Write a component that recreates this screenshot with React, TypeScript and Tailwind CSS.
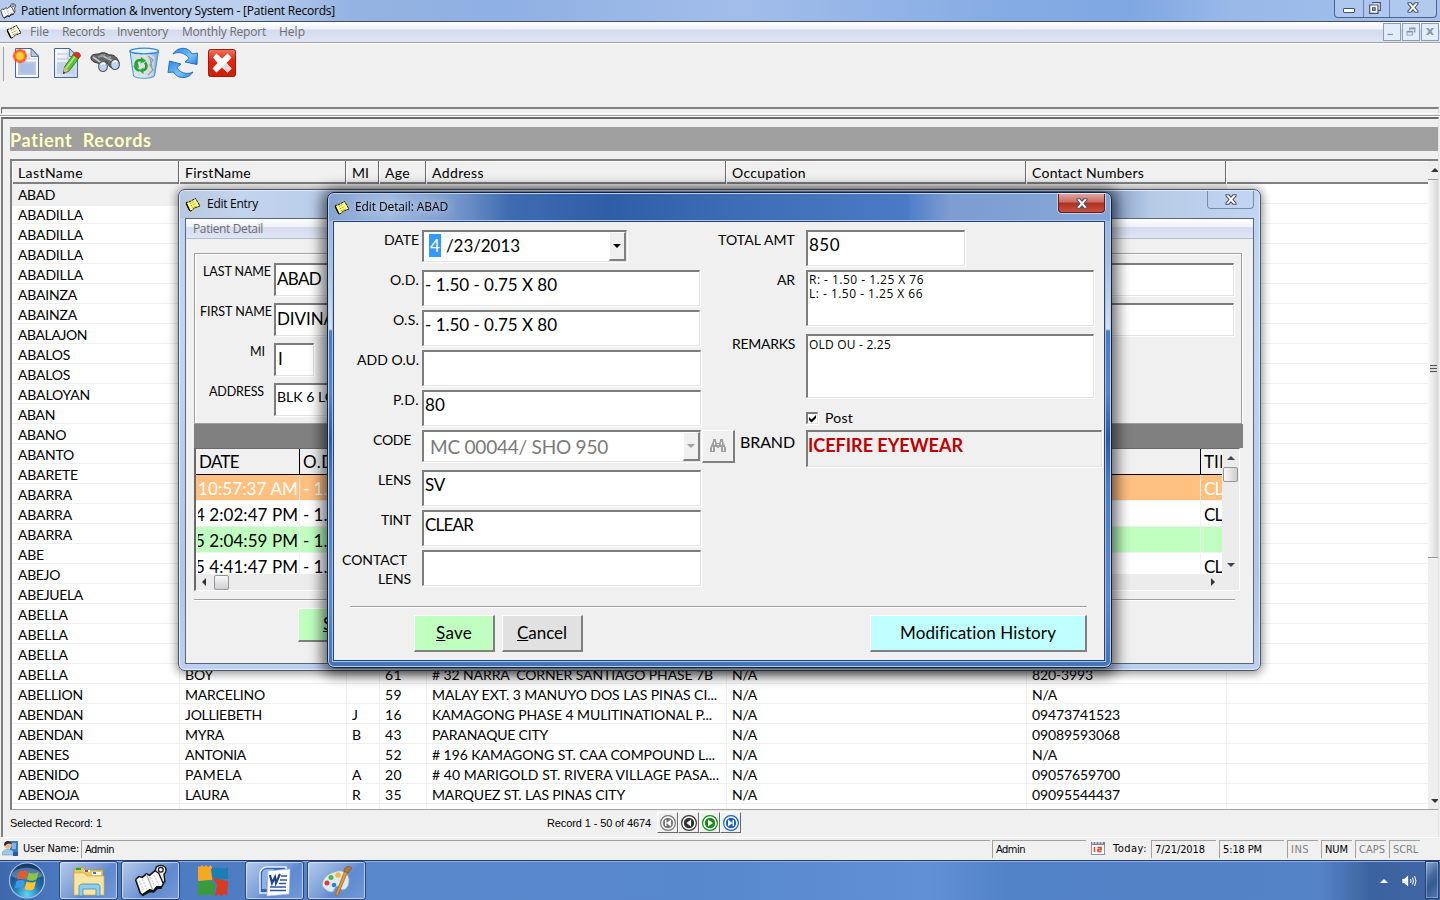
import React, { useLayoutEffect, useRef } from "react";

const CAL = "font-['Lato','Noto_Sans',sans-serif]";
const SEG = "font-['Open_Sans','Noto_Sans',sans-serif]";
const TAH = "font-['DejaVu_Sans_Condensed','DejaVu_Sans',sans-serif]";
const MSS = "font-['Liberation_Sans',sans-serif]";

/* Text run tracked so that it spans exactly `w` pixels. */
function T({ w, className = "", children }: { w?: number; className?: string; children: React.ReactNode }) {
  const ref = useRef<HTMLSpanElement>(null);
  useLayoutEffect(() => {
    const el = ref.current;
    if (!el || !w) return;
    el.style.letterSpacing = "0px";
    const n = (el.textContent || "").length;
    const natural = el.getBoundingClientRect().width;
    if (n > 1) el.style.letterSpacing = `${(w - natural) / n}px`;
  }, [w]);
  return (
    <span ref={ref} className={`inline-block shrink-0 whitespace-pre ${className}`}>
      {children}
    </span>
  );
}

const LAST = [
  "ABAD", "ABADILLA", "ABADILLA", "ABADILLA", "ABADILLA", "ABAINZA", "ABAINZA", "ABALAJON", "ABALOS", "ABALOS",
  "ABALOYAN", "ABAN", "ABANO", "ABANTO", "ABARETE", "ABARRA", "ABARRA", "ABARRA", "ABE", "ABEJO", "ABEJUELA",
  "ABELLA", "ABELLA", "ABELLA",
];
type Cell = string;
const FULL: { c: Cell[]; aw: number }[] = [
  { c: ["ABELLA", "BOY", "", "61", "# 32 NARRA  CORNER SANTIAGO PHASE 7B", "N/A", "820-3993"], aw: 281 },
  { c: ["ABELLION", "MARCELINO", "", "59", "MALAY EXT. 3 MANUYO DOS LAS PINAS CI...", "N/A", "N/A"], aw: 285 },
  { c: ["ABENDAN", "JOLLIEBETH", "J", "16", "KAMAGONG PHASE 4 MULITINATIONAL P...", "N/A", "09473741523"], aw: 280 },
  { c: ["ABENDAN", "MYRA", "B", "43", "PARANAQUE CITY", "N/A", "09089593068"], aw: 116 },
  { c: ["ABENES", "ANTONIA", "", "52", "# 196 KAMAGONG ST. CAA COMPOUND L...", "N/A", "N/A"], aw: 283 },
  { c: ["ABENIDO", "PAMELA", "A", "20", "# 40 MARIGOLD ST. RIVERA VILLAGE PASA...", "N/A", "09057659700"], aw: 287 },
  { c: ["ABENOJA", "LAURA", "R", "35", "MARQUEZ ST. LAS PINAS CITY", "N/A", "09095544437"], aw: 193 },
];
const NAMEW: Record<string, number> = {
  ABAD: 37, ABADILLA: 65, ABAINZA: 59, ABALAJON: 69, ABALOS: 52, ABALOYAN: 72, ABAN: 37, ABANO: 48, ABANTO: 56,
  ABARETE: 60, ABARRA: 54, ABE: 26, ABEJO: 42, ABEJUELA: 65, ABELLA: 50, ABELLION: 65, ABENDAN: 65, ABENES: 51,
  ABENIDO: 61, ABENOJA: 61, BOY: 28, MARCELINO: 80, JOLLIEBETH: 77, MYRA: 39, ANTONIA: 61, PAMELA: 57, LAURA: 44,
  "N/A": 25, "820-3993": 61, "09473741523": 88, "09089593068": 88, "09057659700": 88, "09095544437": 88,
};
const COLS = "grid grid-cols-[167px_167px_33px_47px_300px_300px_200px_1fr]";

function Note({ yellow = false, className = "" }: { yellow?: boolean; className?: string }) {
  return (
    <svg viewBox="0 0 16 16" className={`h-4 w-4 shrink-0 ${className}`}>
      <path d="M1 5.500 L4 5 L10.500 1.500 L12 4 L15 9 L9.500 11 L5.500 14.500 L3.500 11.500 Z" fill={yellow ? "#ffff70" : "#fcfcd8"} stroke="#111" strokeWidth="1" strokeDasharray="2.500 .6" />
      <path d="M5 6.500 L9.500 4.300 M6 8.800 L10.800 6.500 M7 11 L12 8.700" stroke={yellow ? "#8c8c50" : "#777"} strokeWidth=".9" strokeDasharray="1.500 1" />
      <path d="M1.200 6.500 L5 14" stroke="#000" strokeWidth="1.300" />
    </svg>
  );
}

function Binder({ className = "" }: { className?: string }) {
  return (
    <svg viewBox="0 0 32 32" className={className}>
      <path d="M1.500 15 L5 12 L8 13 L12 9.500 L15 11 L21 6 L24 8 L29 18 L27 22 L22 22 L19 26 L15 25 L8 30 L6 28 Z" fill="#fbfbfb" />
      <path d="M5 12 L8 13 L12 9.500 L15 11 L21 6 M1.500 15 L5 12 M29 18 L27 22 L22 22 L19 26 L15 25 L8 30 L6 28 L1.500 15" fill="none" stroke="#111" strokeWidth="1.500" strokeLinejoin="round" />
      <path d="M8 30.500 L15 26.500 L19 27 L22.500 23.500 L27 23" fill="none" stroke="#111" strokeWidth="1.800" />
      <path d="M12 10 L18 25" stroke="#b0b0b0" strokeWidth="1.200" />
      <path d="M5 16 L9 25 M8 15 L12.500 24 M16 13 L20 21.500 M19.500 11 L24 20" stroke="#cfcfcf" strokeWidth="1.200" strokeDasharray="2 1" />
      <path d="M21 7 C20 2 25 .5 29 2 C32 4 31.500 8 29 10 L30 17 L28 18 L24 9 Z" fill="#eee" stroke="#111" strokeWidth="1.300" />
      <circle cx="26" cy="5.500" r="2.300" fill="#fff" stroke="#111" strokeWidth="1.200" />
    </svg>
  );
}

function XGlyph({ dark = "#4b5468" }: { dark?: string }) {
  return (
    <svg viewBox="0 0 12 11" className="h-[11px] w-3">
      <path d="M1 .8 H4 L6 3.2 L8 .8 H11 V2 L8 5.5 L11 9 V10.2 H8 L6 7.8 L4 10.2 H1 V9 L4 5.5 L1 2 Z" fill="#fff" stroke={dark} strokeWidth="1.1" />
    </svg>
  );
}

function ToolIcons() {
  const s = "h-8 w-8 shrink-0";
  return (
    <>
      <svg viewBox="0 0 32 32" className={s}>
        <defs>
          <linearGradient id="pg" x1="0" y1="0" x2="1" y2="1"><stop offset="0" stopColor="#fff" /><stop offset="1" stopColor="#c4d3ee" /></linearGradient>
          <radialGradient id="sun"><stop offset="0" stopColor="#fff27a" /><stop offset=".4" stopColor="#ffb52e" /><stop offset=".7" stopColor="#f3601f" /><stop offset="1" stopColor="#f3401f" stopOpacity="0" /></radialGradient>
        </defs>
        <path d="M4.5 1.5 H20.500 L27.500 9 V30.500 H4.500 Z" fill="#fff" stroke="#466796" />
        <path d="M20 1.500 L27.500 9.500 H20 Z" fill="#b8c8e2" stroke="#466796" strokeWidth=".8" />
        <path d="M18 6 V12 H26 M13 12 H18" stroke="#b9c7e0" fill="none" />
        <rect x="7" y="14.500" width="18" height="13.500" fill="#b7c8e8" />
        <rect x="9" y="17" width="14" height="9" fill="#a9bde2" opacity=".6" />
        <circle cx="9" cy="9" r="8" fill="url(#sun)" />
        <path d="M9 2 V16 M2 9 H16 M4 4 L14 14 M14 4 L4 14" stroke="#f5511e" strokeWidth="1.200" strokeDasharray="2 10 2" />
        <circle cx="9" cy="9" r="3.500" fill="#ffcf3c" />
      </svg>
      <svg viewBox="0 0 32 32" className={s}>
        <path d="M4.500 1.500 H19.500 L27.500 9 V30.500 H4.500 Z" fill="url(#pg)" stroke="#466796" />
        <path d="M19.500 1.500 L27 9.500 H19.500 Z" fill="#c8d5ea" stroke="#466796" strokeWidth=".8" />
        <path d="M7 7 H17 M7 12 H20 M18 5 V12" stroke="#b5c4df" />
        <rect x="7" y="15" width="18" height="12" fill="#c5d2ea" />
        <path d="M23.500 7 L29 11 L19 24 L13.500 26.500 L14.500 20 Z" fill="#5cc238" stroke="#2d7a22" strokeWidth=".9" />
        <path d="M25 9.500 L16 21.500" stroke="#b4ef7a" strokeWidth="1.600" />
        <path d="M14.500 20 L18.500 23.500 L13.500 26.500 Z" fill="#deb98c" />
        <path d="M13.500 24.500 L13 27 L15.300 25.700 Z" fill="#222" />
        <path d="M24.500 5.800 C27 4 32 7 30 9.800 L28.300 11.500 L23.200 7.600 Z" fill="#dd3322" stroke="#a31c12" strokeWidth=".7" />
      </svg>
      <svg viewBox="0 0 32 32" className={s}>
        <path d="M2 10 C3 6 9 8 12 6 C17 5 20 8 20 8 C25 7 29 11 30 16 L27 22 L21 20 L17 14 L15 18 L12 17 L5 15 C3 14 1.500 12 2 10 Z" fill="#666" stroke="#333" />
        <path d="M4 10 L14 17 M12 8 L26 15" stroke="#c5c5c5" strokeWidth="1.800" />
        <path d="M9 10 L16 8 M18 11 L22 10" stroke="#999" strokeWidth="2" />
        <ellipse cx="14" cy="19.500" rx="4.400" ry="5" fill="#bcd7f4" stroke="#555" strokeWidth="1.100" />
        <ellipse cx="26" cy="17.500" rx="4.400" ry="5" fill="#bcd7f4" stroke="#555" strokeWidth="1.100" />
        <path d="M12 18 C13 16 15 16 16 17 M24 16 C25 14 27 14 28 15" stroke="#fff" strokeWidth="1.500" fill="none" />
      </svg>
      <svg viewBox="0 0 32 32" className={s}>
        <defs><linearGradient id="bin" x1="0" x2="1"><stop offset="0" stopColor="#b9e1f6" /><stop offset=".5" stopColor="#e9f3f8" /><stop offset="1" stopColor="#74a9dc" /></linearGradient></defs>
        <path d="M2 4 L5.500 29 C8 32 24 32 26.500 29 L30.500 4 Z" fill="url(#bin)" stroke="#4d91cf" />
        <ellipse cx="16.200" cy="4" rx="14.300" ry="2.800" fill="#dff2fc" stroke="#3986cf" strokeWidth="1.300" />
        <path d="M6 9 L10 7 L15 9 L21 7 L27 10 L25 28 L18 30 L10 29 Z" fill="#d9dde0" opacity=".8" />
        <path d="M20 9 L25 13 L22 18 L25 23 L20 28 M22 11 L24 20" fill="none" stroke="#90a0ad" strokeWidth="1.300" />
        <path d="M7.500 18 C7.500 14 11 12 14.500 13.500 M17 15.500 C20 19 18 23 14.500 23.500 M11.500 23.500 C8.500 23 7 21 7.500 18.500" fill="none" stroke="#2a9d2c" strokeWidth="2.600" />
        <path d="M13 10 L18.500 14 L12.500 16.500 Z M15.500 20.500 L15.500 27 L11 23.500 Z M5 19.500 L10 15.500 L11 21 Z" fill="#29ad2e" />
      </svg>
      <svg viewBox="0 0 32 32" className={s}>
        <defs><linearGradient id="rf" x1="0" y1="0" x2="1" y2="1"><stop offset="0" stopColor="#2786e0" /><stop offset=".6" stopColor="#7bc2fb" /><stop offset="1" stopColor="#2877d2" /></linearGradient></defs>
        <path d="M6 7 C11 -1 22 0 25 7 L30.500 6 L30 17.500 L18 15 L22 11.500 C19 6 11 4 6 7 Z" fill="url(#rf)" stroke="#1f69ba" strokeWidth=".9" />
        <path d="M26 25 C21 33 10 32 6.500 25 L1 25.500 L2.500 14 L14 17 L10 20.500 C13 26 20 28 26 25 Z" fill="url(#rf)" stroke="#1f69ba" strokeWidth=".9" />
      </svg>
      <svg viewBox="0 0 32 32" className={s}>
        <defs><linearGradient id="rd" x1="0" y1="0" x2="0" y2="1"><stop offset="0" stopColor="#f0765f" /><stop offset=".4" stopColor="#e3280f" /><stop offset="1" stopColor="#cf1d06" /></linearGradient></defs>
        <rect x="2.500" y="2.500" width="27" height="27" rx="2" fill="url(#rd)" stroke="#9f1a0b" />
        <path d="M7 10.500 L10.500 6.500 L16 11.500 L21.500 6.500 L25.500 10.500 L20.500 16 L25.500 21.500 L21.500 25.500 L16 20.500 L10.500 25.500 L6.500 21.500 L11.500 16 Z" fill="#fff" />
        <path d="M16 20.500 L21.500 25.500 L25.500 21.500 L20.500 16" fill="#dcdcdc" />
      </svg>
    </>
  );
}

const SUNK = "border-t-2 border-l-2 border-b border-r border-t-[#7c7c7c] border-l-[#7c7c7c] border-b-[#e3e3e3] border-r-[#e3e3e3] shadow-[1px_1px_0_#fff]";
const RAISED = "border-t border-l border-b-2 border-r-2 border-t-white border-l-white border-b-[#808080] border-r-[#808080]";

function Caret({ dir = "down", color = "#000", className = "" }: { dir?: "up" | "down" | "left" | "right"; color?: string; className?: string }) {
  const d = { down: "M0 2 H8 L4 6 Z", up: "M0 6 H8 L4 2 Z", left: "M6 0 V8 L2 4 Z", right: "M2 0 V8 L6 4 Z" }[dir];
  return (
    <svg viewBox="0 0 8 8" className={`h-2 w-2 shrink-0 ${className}`}><path d={d} fill={color} /></svg>
  );
}

function Row({ label, lw, pr = 3, children }: { label: string; lw: number; pr?: number; children: React.ReactNode }) {
  return (
    <div className="flex h-10 items-start">
      <div className="flex w-[88px] shrink-0 justify-end text-[14px] leading-[20px]" style={{ paddingRight: pr }}>
        <T w={lw}>{label}</T>
      </div>
      {children}
    </div>
  );
}
function Field({ v, w, cls = "w-[278px]" }: { v?: string; w?: number; cls?: string }) {
  return (
    <div className={`h-9 shrink-0 overflow-hidden bg-white pl-[1px] text-[17px] leading-[26px] ${SUNK} ${cls}`}>{v ? <T w={w}>{v}</T> : null}</div>
  );
}

function DetailWindow() {
  return (
    <section className="absolute left-[327px] top-[192px] flex h-[476px] w-[785px] flex-col rounded-[7px] border border-[#14233c] bg-[linear-gradient(180deg,#93b0de_0px,#a8bfe2_70px,#d4e0f2_136px,#4b7cc3_138px,#5585c9_200px,#2c5a9d_245px,#4b7bc0_290px,#5d8acb_400px,#4573b8_100%)] pb-[6px] pl-[5px] pr-[6px] shadow-[inset_0_0_0_1px_#b9d0ee,0_2px_14px_5px_rgba(0,0,0,0.6)]">
      <div className="-ml-[4px] -mr-[5px] mt-px flex h-[27px] shrink-0 items-start rounded-t-[5px] bg-[linear-gradient(90deg,#87a4d2_0px,#9fb8df_60px,#7898cc_125px,#3f6cb0_180px,#2f5ea8_280px,#3c6cb5_400px,#4b7bc6_580px,#4f7fc8_545px,#7c9cd2_620px,#84a4d6_730px,#84a4d6_100%)] pl-[5px]">
        <Note yellow className="mt-[6px]" />
        <div className={`ml-[5px] mt-[4px] rounded-full text-[12px] leading-[18px] text-black ${SEG}`}><T w={93} className="drop-shadow-[0_0_5px_rgba(255,255,255,0.9)]">Edit Detail: ABAD</T></div>
        <div className="ml-auto mr-[5px] flex h-[19px] w-[47px] items-center justify-center rounded-b-[4px] border border-t-0 border-[#5b1f1f] bg-[linear-gradient(#dfa49c,#cc6d62_45%,#ae2e1f_50%,#c8513f)] shadow-[0_0_0_1px_rgba(255,255,255,0.5)]">
          <XGlyph />
        </div>
      </div>
      <div className={`flex grow flex-col border border-[#26436f] bg-[#f0f0f0] text-black shadow-[0_0_0_1px_#a9c4ea] ${CAL}`}>
        <div className="flex h-[365px] pt-[8px]">
          <div className="w-[372px] shrink-0">
            <Row label="DATE" lw={35}>
              <div className={`flex h-8 w-[205px] items-stretch bg-white pl-[5px] text-[17px] leading-[27px] ${SUNK}`}>
                <span className="mt-[2px] h-[23px] w-3 bg-[#3399ff] pl-[1px] leading-[24px] text-white">4</span>
                <T w={74} className="ml-[5px]">/23/2013</T>
                <div className={`ml-auto flex w-[17px] items-center justify-center bg-[#f0f0f0] ${RAISED}`}><Caret /></div>
              </div>
            </Row>
            <Row label="O.D." lw={29}><Field v="- 1.50 - 0.75 X 80" w={132} /></Row>
            <Row label="O.S." lw={26}><Field v="- 1.50 - 0.75 X 80" w={132} /></Row>
            <Row label="ADD O.U." lw={62}><Field cls="w-[279px]" /></Row>
            <Row label="P.D." lw={26}><Field v="80" w={20} cls="w-[279px]" /></Row>
            <Row label="CODE" lw={38} pr={11}>
              <div className={`flex h-8 w-[279px] shrink-0 items-stretch bg-white pl-[6px] text-[19px] leading-[30px] text-[#7a7a7a] ${SUNK}`}>
                <T w={178}>MC 00044/ SHO 950</T>
                <div className={`ml-auto flex w-[17px] items-center justify-center bg-[#f0f0f0] ${RAISED}`}><Caret color="#a0a0a0" /></div>
              </div>
              <div className={`ml-[1px] flex h-[33px] w-[33px] shrink-0 items-center justify-center bg-[#f0f0f0] ${RAISED}`}>
                <svg viewBox="0 0 16 14" className="h-[14px] w-4" fill="#a0a0a0">
                  <path d="M3 0 H6 V2 L7 4 H9 L10 2 V0 H13 V2 L16 9 V13 H11 V8 H9 V9 H7 V8 H5 V13 H0 V9 L3 2 Z" />
                  <path d="M2 8 H3 V12 H2 Z M13 8 H14 V12 H13 Z M4 3 H5 V6 H4 Z M11 3 H12 V6 H11 Z M7 5 H9 V6 H7 Z" fill="#f0f0f0" />
                </svg>
              </div>
            </Row>
            <Row label="LENS" lw={33} pr={11}><Field v="SV" w={20} cls="w-[279px]" /></Row>
            <Row label="TINT" lw={30} pr={11}><Field v="CLEAR" w={48} cls="w-[279px]" /></Row>
            <div className="flex h-10 items-start">
              <div className="flex w-[88px] shrink-0 flex-col items-end pr-[11px] text-[14px] leading-[19px]">
                <T w={65} className="mr-1">CONTACT</T><T w={33}>LENS</T>
              </div>
              <Field cls="w-[279px]" />
            </div>
          </div>
          <div className="flex w-[396px] shrink-0 flex-col text-[14px] leading-[20px]">
            <div className="flex h-10"><div className="flex w-[100px] shrink-0 justify-end pr-[11px]"><T w={77}>TOTAL AMT</T></div>
              <Field v="850" w={31} cls="w-[159px]" /></div>
            <div className="flex h-16"><div className="flex w-[100px] shrink-0 justify-end pr-[11px]"><T w={18}>AR</T></div>
              <div className={`flex h-14 w-[288px] flex-col items-start bg-white pl-[1px] pt-[1px] text-[12px] leading-[14px] ${SEG} ${SUNK}`}>
                <T w={115}>R: - 1.50 - 1.25 X 76</T><T w={114}>L: - 1.50 - 1.25 X 66</T>
              </div></div>
            <div className="flex h-[74px]"><div className="flex w-[100px] shrink-0 justify-end pr-[11px]"><T w={63}>REMARKS</T></div>
              <div className={`h-16 w-[288px] bg-white pl-[1px] pt-[1px] text-[12px] leading-[16px] ${SEG} ${SUNK}`}><T w={82}>OLD OU - 2.25</T></div></div>
            <div className="mb-[2px] flex h-5 items-center pl-[100px]">
              <div className={`flex h-3 w-3 items-center justify-center bg-white ${SUNK}`}><svg viewBox="0 0 9 9" className="h-[9px] w-[9px] shrink-0"><path d="M1 3 L3.500 5.500 L8 1 V4 L3.500 8.500 L1 6 Z" fill="#000" /></svg></div>
              <T w={28} className="ml-[7px]">Post</T>
            </div>
            <div className="flex h-[37px]"><div className="flex w-[100px] shrink-0 justify-end pr-[11px] text-[16px] leading-[23px]"><T w={55}>BRAND</T></div>
              <div className={`h-[37px] w-[296px] bg-[#f0f0f0] text-[18px] font-bold leading-[27px] text-[#c00000] ${SUNK}`}><T w={155}>ICEFIRE EYEWEAR</T></div></div>
          </div>
        </div>
        <div className="ml-[16px] mt-[19px] h-[2px] w-[737px] shrink-0 border-b border-white bg-[#a0a0a0]" />
        <div className="mt-[7px] flex text-[17px] leading-[34px]">
          <div className={`ml-[80px] flex h-[37px] w-[81px] justify-center bg-[#c0ffc0] ${RAISED}`}><T w={36}><u>S</u>ave</T></div>
          <div className={`ml-[7px] flex h-[37px] w-[81px] justify-center bg-[#e1e1e1] ${RAISED}`}><T w={50}><u>C</u>ancel</T></div>
          <div className={`ml-[287px] flex h-[37px] w-[217px] justify-center bg-[#c0ffff] ${RAISED}`}><T w={156}>Modification History</T></div>
        </div>
      </div>
    </section>
  );
}

function ELabel({ t, w, pr }: { t: string; w: number; pr: number }) {
  return <div className="flex w-[79px] shrink-0 justify-end text-[12.500px] leading-[18px]" style={{ paddingRight: pr }}><T w={w}>{t}</T></div>;
}

const GRID = [
  { d: "10:57:37 AM", od: "- 1.50", t: "CL", c: "bg-[#ffc080] text-white", w: 100 },
  { d: "4 2:02:47 PM", od: "- 1.50", t: "CL", c: "bg-white", w: 103 },
  { d: "5 2:04:59 PM", od: "- 1.50", t: "", c: "bg-[#c0ffc0]", w: 103 },
  { d: "5 4:41:47 PM", od: "- 1.50", t: "CL", c: "bg-white", w: 103 },
];

function EntryWindow() {
  return (
    <section className="absolute left-[178px] top-[189px] flex h-[482px] w-[1083px] flex-col rounded-[7px] border border-[#4b5568] bg-[linear-gradient(180deg,#bdd2f0,#c0d6f6_30%,#b0c6e8_80%,#bdd0f0)] px-[6px] pb-[6px] shadow-[inset_0_0_0_1px_#e2edfb,0_1px_9px_2px_rgba(0,0,0,0.4)]">
      <div className="-mx-[5px] mt-px flex h-[27px] shrink-0 items-start rounded-t-[5px] bg-[linear-gradient(90deg,#b8c8de,#c3d4ee_60px,#b7cbe8_160px,#5f7fb2_900px,#b7cae6_970px,#c2d5f3)] pl-[5px]">
        <Note yellow className="mt-[6px]" />
        <div className={`ml-[6px] mt-[4px] text-[12px] leading-[18px] text-black ${SEG}`}><T w={51}>Edit Entry</T></div>
        <div className="ml-auto mr-[5px] flex h-[18px] w-[47px] items-center justify-center rounded-b-[4px] border border-t-0 border-[#7b8ba8]"><XGlyph /></div>
      </div>
      <div className={`flex grow flex-col overflow-hidden border border-[#5b6678] bg-[#f0f0f0] text-black ${CAL}`}>
        <div className={`h-5 shrink-0 border-b border-[#b4bccf] bg-[linear-gradient(#fff,#eef1f9_40%,#d6dcee_45%,#dfe5f5)] pl-[7px] text-[12px] leading-[20px] text-[#6d6d6d] ${SEG}`}><T w={70}>Patient Detail</T></div>
        <div className="ml-[8px] mt-[14px] flex h-[171px] w-[1048px] shrink-0 flex-col border border-[#a0a0a0] pt-[9px] shadow-[inset_1px_1px_0_#fff,1px_1px_0_#fff]">
          <div className="flex h-10"><ELabel t="LAST NAME" w={68} pr={3} /><div className={`h-[33px] w-[960px] bg-white pl-[1px] text-[17px] leading-[27px] ${SUNK}`}><T w={44}>ABAD</T></div></div>
          <div className="flex h-10"><ELabel t="FIRST NAME" w={72} pr={2} /><div className={`h-[33px] w-[960px] bg-white pl-[1px] text-[17px] leading-[27px] ${SUNK}`}><T w={58}>DIVINA</T></div></div>
          <div className="flex h-10"><ELabel t="MI" w={15} pr={9} /><div className={`h-[33px] w-[40px] bg-white pl-[2px] text-[17px] leading-[28px] ${SUNK}`}>I</div></div>
          <div className="flex h-9"><ELabel t="ADDRESS" w={55} pr={10} /><div className={`h-[33px] w-[500px] bg-white pl-[1px] text-[14px] leading-[24px] ${SUNK}`}><T w={67}>BLK 6 LOT</T></div></div>
        </div>
        <div className="ml-[8px] h-6 w-[1049px] shrink-0 bg-[#808080]" />
        <div className="ml-[8px] flex h-[143px] w-[1046px] shrink-0 flex-col border-b border-l-2 border-r border-t border-b-white border-l-[#696969] border-r-white border-t-[#696969]">
          <div className="flex h-[125px] overflow-hidden">
            <div className="w-[1026px] shrink-0 overflow-hidden">
              <div className="flex h-[26px] border-b border-black text-[17px] leading-[26px]">
                <div className="w-[104px] shrink-0 border-r border-black pl-[3px]"><T w={40}>DATE</T></div>
                <div className="w-[901px] shrink-0 border-r border-black pl-[3px]"><T w={36}>O.D.</T></div>
                <div className="w-[21px] overflow-hidden pl-[3px]"><T w={38}>TINT</T></div>
              </div>
              {GRID.map((r, i) => (
                <div key={i} className={`flex h-[26px] border-b border-[#f0f0f0] text-[17px] leading-[27px] ${r.c}`}>
                  <div className="flex w-[104px] shrink-0 border-r border-[#f0f0f0] pl-[2px]"><div className="flex grow justify-end overflow-hidden pr-px"><T w={r.w}>{r.d}</T></div></div>
                  <div className="w-[901px] shrink-0 border-r border-[#f0f0f0] pl-[3px]"><T w={44}>{r.od}</T></div>
                  <div className="w-[21px] overflow-hidden pl-[3px] leading-[28px]">{r.t ? <T w={48}>{r.t + "EAR"}</T> : null}</div>
                </div>
              ))}
            </div>
            <div className="flex w-[17px] shrink-0 flex-col items-center bg-[#ececec]">
              <Caret dir="up" color="#444" className="mt-[5px]" />
              <div className="mt-[5px] h-[15px] w-[15px] rounded-[2px] border border-[#959595] bg-gradient-to-r from-[#f8f8f8] to-[#cfcfd2]" />
              <Caret color="#444" className="mb-[5px] mt-auto" />
            </div>
          </div>
          <div className="flex h-4 items-center bg-[#ececec] pl-[4px] pr-[22px]">
            <Caret dir="left" color="#333" />
            <div className="ml-[6px] h-[15px] w-[15px] rounded-[2px] border border-[#959595] bg-gradient-to-b from-[#f8f8f8] to-[#cfcfd2]" />
            <Caret dir="right" color="#333" className="ml-auto" />
          </div>
        </div>
        <div className="ml-[8px] mt-[8px] h-[2px] w-[1041px] shrink-0 border-b border-white bg-[#a0a0a0]" />
        <div className={`ml-[112px] mt-[7px] h-[34px] w-[82px] shrink-0 bg-[#c0ffc0] pl-[24px] text-[17px] leading-[30px] ${RAISED}`}><u>S</u>ave</div>
      </div>
    </section>
  );
}

function NavBtn({ c, d }: { c: string; d: string }) {
  return (
    <div className="flex h-[21px] w-[21px] items-center justify-center border-b border-r border-t border-l border-b-[#696969] border-l-white border-r-[#696969] border-t-white bg-[#f0f0f0]">
      <svg viewBox="0 0 18 18" className="h-[18px] w-[18px]">
        <circle cx="9" cy="9" r="7.400" fill="#fff" stroke={c} strokeWidth="1.200" />
        <circle cx="9" cy="9" r="5.200" fill={c} />
        <path d={d} fill="#fff" />
      </svg>
    </div>
  );
}

function Pane({ t, w, cls, tc = "text-black" }: { t: string; w: number; cls: string; tc?: string }) {
  return <div className={`h-[18px] shrink-0 border-l border-t border-[#a0a0a0] pl-[3px] leading-[17px] ${tc} ${cls}`}><T w={w}>{t}</T></div>;
}

const TB = "flex h-[39px] w-[59px] shrink-0 items-center justify-center rounded-[3px] border border-[#27467c] bg-[linear-gradient(135deg,#b5caec_0%,#7c9fd9_45%,#5f8ad0_60%,#7398d6_100%)] shadow-[inset_0_0_0_1px_rgba(255,255,255,0.55)]";

export default function App() {
  return (
    <div className={`relative flex h-[900px] w-[1440px] flex-col overflow-hidden bg-[#f0f0f0] text-black ${CAL}`}>
      <header className="flex h-[22px] shrink-0 items-start border-b border-[#3e4c66] bg-[linear-gradient(90deg,#b5cbed_0px,#bdd0ee_250px,#94b3e2_350px,#8fb0e3_500px,#a2bdea_740px,#86ace4_1000px,#7fa7e2_1130px,#98b8e8_1230px,#a5c1ec_1440px)]">
        <Binder className="mt-[3px] h-4 w-4" />
        <div className={`ml-[5px] text-[12px] leading-[21px] ${SEG}`}><T w={314}>Patient Information &amp; Inventory System - [Patient Records]</T></div>
        <div className="ml-auto mr-[3px] flex h-[18px] w-[103px] rounded-b-[4px] border border-t-0 border-[#4e628c] bg-white/15">
          <div className="flex w-[29px] items-end justify-center border-r border-[#6d83ad] pb-[4px]"><div className="h-[5px] w-3 rounded-[1px] border border-[#44506a] bg-white" /></div>
          <div className="flex w-[26px] items-center justify-center border-r border-[#6d83ad] pb-px pr-[3px]">
            <svg viewBox="0 0 12 12" className="h-3 w-3"><path d="M3 .7 H11.300 V8.500 H9 M.7 3 H9 V11.300 H.7 Z" fill="#fff" stroke="#44506a" strokeWidth="1.200" /><rect x="3.500" y="5.700" width="2.700" height="2.700" fill="#8faede" stroke="#44506a" /></svg>
          </div>
          <div className="flex grow items-center justify-center pb-[2px]"><XGlyph /></div>
        </div>
      </header>
      <nav className={`flex h-5 shrink-0 items-start bg-[linear-gradient(#fff,#eff2fa_35%,#d5dbee_40%,#dfe5f6)] pl-[6px] text-[12px] leading-[20px] text-[#6d6d6d] ${SEG}`}>
        <Note className="mt-[2px]" />
        <T w={19} className="ml-[8px]">File</T>
        <T w={43} className="ml-[13px]">Records</T>
        <T w={51} className="ml-[12px]">Inventory</T>
        <T w={84} className="ml-[14px]">Monthly Report</T>
        <T w={26} className="ml-[13px]">Help</T>
        <div className="ml-auto mr-[1px] mt-[1px] flex gap-[1px]">
          {["M4 11 H10 V12.500 H4 Z", "M7 4 H14 V9.500 H12 V8 H12.800 V6 H8 V7 H7 Z M4 7.500 H11 V13 H4 Z M5 9.500 V12 H10 V9.500 Z", "M4.500 4.500 H7 L9 6.700 L11 4.500 H13.500 L10.500 8.500 L13.500 12.500 H11 L9 10.300 L7 12.500 H4.500 L7.500 8.500 Z"].map((d, i) => (
            <div key={i} className="h-[18px] w-[18px] border border-[#8a9cb8] bg-[#e1edf8]"><svg viewBox="0 0 18 18" className="h-4 w-4"><path d={d} fill="#8596ab" fillRule="evenodd" /></svg></div>
          ))}
        </div>
      </nav>
      <div className="flex h-[65px] shrink-0 items-start gap-[7px] border-t border-[#a0a0a0] pl-[3px] pt-[4px] shadow-[inset_0_1px_0_#fff]">
        <div className="h-[34px] w-px shrink-0 bg-[#a0a0a0]" />
        <ToolIcons />
      </div>
      <div className="ml-[1px] mr-[1px] h-[7px] shrink-0 border-b border-l border-r border-t-2 border-b-white border-l-[#696969] border-r-[#d8d8d8] border-t-[#808080]" />
      <div className="mt-[1px] h-[2px] shrink-0 border-t border-[#a0a0a0] bg-white" />

      <main className="ml-[1px] mr-[1px] flex h-[720px] shrink-0 flex-col border-l-2 border-r border-t-2 border-l-[#808080] border-r-[#e3e3e3] border-t-[#696969] pl-[7px]">
        <h1 className="mt-[8px] h-6 shrink-0 bg-[#a0a0a0] text-[18px] font-bold leading-[27px] text-[#ffffc0]"><T w={142}>Patient  Records</T></h1>
        <div className="mt-[8px] flex h-[651px] shrink-0 border-b border-l-2 border-t-2 border-b-[#a0a0a0] border-l-[#808080] border-t-[#808080] bg-white">
          <div className="w-[1416px] shrink-0 overflow-hidden">
            <div className={`${COLS} h-[23px] border-b-2 border-[#808080] bg-[#f0f0f0] text-[14px] leading-[23px]`}>
              {([["LastName", 65], ["FirstName", 66], ["MI", 17], ["Age", 25], ["Address", 52], ["Occupation", 74], ["Contact Numbers", 112]] as [string, number][]).map(([h, w]) => (
                <div key={h} className="border-r border-[#696969] pl-[6px] shadow-[inset_1px_1px_0_#fff]"><T w={w}>{h}</T></div>
              ))}
              <div className="shadow-[inset_1px_1px_0_#fff]" />
            </div>
            {LAST.map((n, i) => (
              <div key={i} className={`${COLS} h-5 border-b border-[#efefef] text-[14px] leading-[22px]`}>
                <div className={`pl-[6px] ${i === 0 ? "bg-[#f0f0f0]" : ""}`}><T w={NAMEW[n]}>{n}</T></div>
                {[0, 1, 2, 3, 4, 5].map((k) => <div key={k} className={`border-l border-[#efefef] ${i === 0 ? "bg-[#f0f0f0]" : ""}`} />)}
                <div className="border-l border-[#efefef]" />
              </div>
            ))}
            {FULL.map((r, i) => (
              <div key={i} className={`${COLS} h-5 border-b border-[#efefef] text-[14px] leading-[22px]`}>
                {r.c.map((v, k) => (
                  <div key={k} className={k ? "border-l border-[#efefef] pl-[5px]" : "pl-[6px]"}>
                    {v ? <T w={k === 4 ? r.aw : k === 3 ? 17 : NAMEW[v]}>{v}</T> : null}
                  </div>
                ))}
                <div className="border-l border-[#efefef]" />
              </div>
            ))}
            <div className={`${COLS} h-5`}>
              {[0, 1, 2, 3, 4, 5, 6, 7].map((k) => <div key={k} className={k ? "border-l border-[#efefef]" : ""} />)}
            </div>
          </div>
          <div className="flex grow flex-col items-center overflow-hidden bg-[#efefef]">
            <Caret dir="up" color="#333" className="ml-[4px] mt-[5px]" />
            <div className="ml-[1px] mt-[5px] flex h-[379px] w-[14px] shrink-0 items-center justify-center rounded-[2px] border border-[#979797] bg-[linear-gradient(90deg,#fafafa,#e6e6e8_50%,#d0d0d4)]">
              <div className="h-2 w-[7px] bg-[repeating-linear-gradient(#555_0_1px,#ddd_1px_3px)]" />
            </div>
            <Caret color="#333" className="mb-[4px] ml-[4px] mt-auto" />
          </div>
        </div>
        <div className={`flex h-[25px] shrink-0 items-center text-[11px] leading-[14px] ${MSS}`}>
          <T w={92}>Selected Record: 1</T>
          <T w={104} className="ml-[445px]">Record 1 - 50 of 4674</T>
          <div className="ml-[6px] flex">
            <NavBtn c="#777" d="M6 6 H7.500 V12 H6 Z M12 5.500 V12.500 L7.500 9 Z" />
            <NavBtn c="#333" d="M11 5.500 V12.500 L6.500 9 Z" />
            <NavBtn c="#158a15" d="M7 5.500 V12.500 L12 9 Z" />
            <NavBtn c="#1a5fc8" d="M6 5.500 V12.500 L10.500 9 Z M10.500 6 H12 V12 H10.500 Z" />
          </div>
        </div>
      </main>

      <footer className={`flex h-[23px] shrink-0 items-start border-t border-white pl-[2px] pt-[2px] text-[11px] ${TAH}`}>
        <svg viewBox="0 0 16 16" className="h-4 w-4 shrink-0">
          <rect x="8" y="1" width="8" height="11" fill="#3f78c5" /><path d="M10 3 H14 V9 H10 Z" fill="#7db2ec" />
          <circle cx="6" cy="5" r="3.700" fill="#e8b98d" /><path d="M2 5 C2 0 9 0 10 4 C7 3 5 3 3 6 Z" fill="#2d2622" />
          <path d="M0 15 C0 10 4 9 7 9.500 C11 10 12 12 12 15 Z" fill="#9cc9e6" stroke="#6a93b5" strokeWidth=".6" /><path d="M11 12 H16 V16 H11 Z" fill="#2b58a5" />
        </svg>
        <T w={56} className="ml-[5px] leading-[18px]">User Name:</T>
        <div className="w-[2px]" />
        <Pane t="Admin" w={29} cls="w-[909px]" />
        <div className="w-[2px]" />
        <Pane t="Admin" w={29} cls="w-[94px]" />
        <svg viewBox="0 0 16 16" className="ml-[4px] h-4 w-4 shrink-0">
          <rect x="1.500" y="2.500" width="13" height="12" fill="#fff" stroke="#8c93b8" /><path d="M1 2 H15 V5 H1 Z" fill="#7d7f94" />
          <path d="M3 1 V4 M6 1 V4 M9 1 V4 M12 1 V4" stroke="#fff" /><path d="M4.500 7 V12 M7.500 7.500 H11 V9.500 H8 V11.500 H11.500" stroke="#e0481c" strokeWidth="1.500" fill="none" />
        </svg>
        <T w={34} className="ml-[7px] leading-[18px]">Today:</T>
        <div className="ml-[4px] flex gap-[3px]">
          <Pane t="7/21/2018" w={50} cls="w-[65px]" />
          <Pane t="5:18 PM" w={39} cls="w-[65px]" />
          <Pane t="INS" w={18} cls="w-[31px]" tc="text-[#808080]" />
          <Pane t="NUM" w={23} cls="w-[31px]" />
          <Pane t="CAPS" w={26} cls="w-[31px]" tc="text-[#808080]" />
          <Pane t="SCRL" w={25} cls="w-[31px]" tc="text-[#808080]" />
        </div>
      </footer>

      <div className="flex h-10 shrink-0 items-start border-t border-[#26406e] bg-[linear-gradient(90deg,#3e68ab_0px,#4b79c0_60px,#4e7dc4_240px,#5a88cd_380px,#5787cd_700px,#6190d6_930px,#5181c6_1010px,#5583c8_1320px,#3c639f_1370px,#3f66a4_1440px)] shadow-[inset_0_1px_0_#8daede]">
        <svg viewBox="0 0 59 39" className="h-[39px] w-[59px] shrink-0">
          <defs><radialGradient id="orb" cx=".5" cy=".9" r=".85"><stop offset="0" stopColor="#5fd6f5" /><stop offset=".45" stopColor="#2374b0" /><stop offset="1" stopColor="#16386a" /></radialGradient></defs>
          <circle cx="27" cy="19.500" r="17.500" fill="url(#orb)" stroke="#a9c4e6" strokeWidth="1.200" />
          <path d="M11 15 C13 4 40 4 43 15 C35 19 20 20 11 15 Z" fill="#fff" opacity=".25" />
          <path d="M19 11 C22 9 25 9.500 27.500 11 L25.500 18.500 C23 17 20 17 17 18.500 Z" fill="#ea5a24" />
          <path d="M28.800 11.500 C31 12.800 35 13 38.500 11 L36.500 18.500 C33 20.300 30 20 27 18.800 Z" fill="#8ec641" />
          <path d="M16.500 20 C19 18.500 22.500 18.500 25 20 L23 27.500 C20.500 26 17.500 26 14.500 27.500 Z" fill="#3b9be6" />
          <path d="M26.500 20.500 C29 22 33 22 36 20.300 L34 28 C31 30 27 29.500 24.500 28 Z" fill="#fdc52f" />
        </svg>
        <div className={TB}>
          <svg viewBox="0 0 34 32" className="h-8 w-[34px]">
            <path d="M2 4 L11 2 L13 5 H31 V29 H2 Z" fill="#e8c866" stroke="#b8963a" strokeWidth=".8" />
            <path d="M4 3 H9 V5 H4 Z" fill="#26a526" /><path d="M12 5 H18 V7 H12 Z" fill="#fff" /><path d="M13 5 H16 V7 H13 Z" fill="#d43b22" /><path d="M20 7 H29 V10 H20 Z" fill="#fff" /><path d="M21 7 H24 V9 H21 Z" fill="#2a7bd4" />
            <path d="M2 8 H12 L15 11 H32 V30 H2 Z" fill="#f8e6a0" stroke="#cda94c" strokeWidth=".7" />
            <path d="M7 31 V22 C7 19.500 9 19 11 19 H24 C27 19 28 20 28 22 V31 H24 V24 H11 V31 Z" fill="#8fcdee" stroke="#3f8cbf" strokeWidth=".8" />
          </svg>
        </div>
        <div className={`ml-[3px] ${TB}`}><Binder className="h-[33px] w-[33px]" /></div>
        <div className="ml-[3px] flex h-[39px] w-[59px] items-center justify-center">
          <svg viewBox="0 0 32 32" className="h-8 w-8">
            <path d="M1 1 L3 2 L5 0 L7 2 L9 0 L11 2 L14 0 L16 6 L15 15 L1 16 Z" fill="#f6a823" /><path d="M14 4 C19 1 27 5 31 2 V14 L20 15 L15 12 Z" fill="#1b7fb4" />
            <path d="M1 17 L12 15 L18 19 L17 31 L12 29 L8 31 L5 29 L1 31 Z" fill="#3a9b3c" /><path d="M16 13 L31 16 L30 31 L27 29 L24 31 L22 29 L18 31 L20 20 Z" fill="#d83a22" />
          </svg>
        </div>
        <div className={`ml-[3px] ${TB}`}>
          <svg viewBox="0 0 32 32" className="h-8 w-8">
            <path d="M8 2 H27 V28 H1 V9 C1 5 4 2 8 2 Z" fill="#3b62b0" stroke="#e8f0ff" strokeWidth="1.500" />
            <path d="M8 4 H16 C9 7 7 13 8 24 H3 V9 C3 6 5 4 8 4 Z" fill="#92b1e6" />
            <path d="M9 6 L31 4 L30 29 L8 31 Z" fill="#fff" stroke="#b6c4de" strokeWidth=".7" />
            <path d="M11 10 L13 18 L16 12 L17 18 L21 9" fill="none" stroke="#1f4496" strokeWidth="2.200" />
            <path d="M22 11 H28 M21 15 H28 M20 18.500 H27 M11 22 H27 M11 25.500 H27" stroke="#2b54a8" strokeWidth="1.500" />
          </svg>
        </div>
        <div className={`ml-[3px] ${TB}`}>
          <svg viewBox="0 0 32 32" className="h-8 w-8">
            <path d="M13 7 C22 3 29 9 28 17 C27 25 21 27 19 23 C17 19 13 23 13 26 C10 29 3 25 1 20 C1 14 6 9 13 7 Z" fill="#dcebf5" stroke="#88a9c2" strokeWidth=".9" />
            <circle cx="6" cy="18" r="2.500" fill="#e03a32" /><circle cx="10" cy="12.500" r="2.500" fill="#58b33c" /><circle cx="17" cy="10" r="2.700" fill="#f5b73a" /><circle cx="13" cy="20" r="2.300" fill="#2a80cc" />
            <path d="M27 6 L17 30 L15 31 L15 28 L24 5 Z" fill="#e9982d" stroke="#9d5e1c" strokeWidth=".7" /><path d="M23 6 C23 2 27 0 31 3 C31 5 28 5 27 8 Z" fill="#b57439" stroke="#7e4a1f" strokeWidth=".6" />
          </svg>
        </div>
        <svg viewBox="0 0 8 4" className="ml-auto mt-[18px] h-1 w-2"><path d="M0 4 L4 0 L8 4 Z" fill="#fff" /></svg>
        <svg viewBox="0 0 16 14" className="ml-[13px] mt-[13px] h-[14px] w-4">
          <path d="M1 4.500 H3.500 L7.500 .8 V13.200 L3.500 9.500 H1 Z" fill="#fff" stroke="#26406e" strokeWidth=".5" /><path d="M9.500 5 Q10.700 7 9.500 9 M11.500 3.500 Q13.500 7 11.500 10.500 M13.500 2 Q16.500 7 13.500 12" stroke="#fff" fill="none" strokeWidth="1" />
        </svg>
        <div className="ml-[8px] mr-[1px] h-[38px] w-[14px] border border-[#23406f] bg-[linear-gradient(135deg,#8fa9d2,#44699f_40%,#365a95_60%,#5478b2)] shadow-[inset_0_0_0_1px_rgba(255,255,255,0.3)]" />
      </div>

      <EntryWindow />
      <DetailWindow />
    </div>
  );
}
